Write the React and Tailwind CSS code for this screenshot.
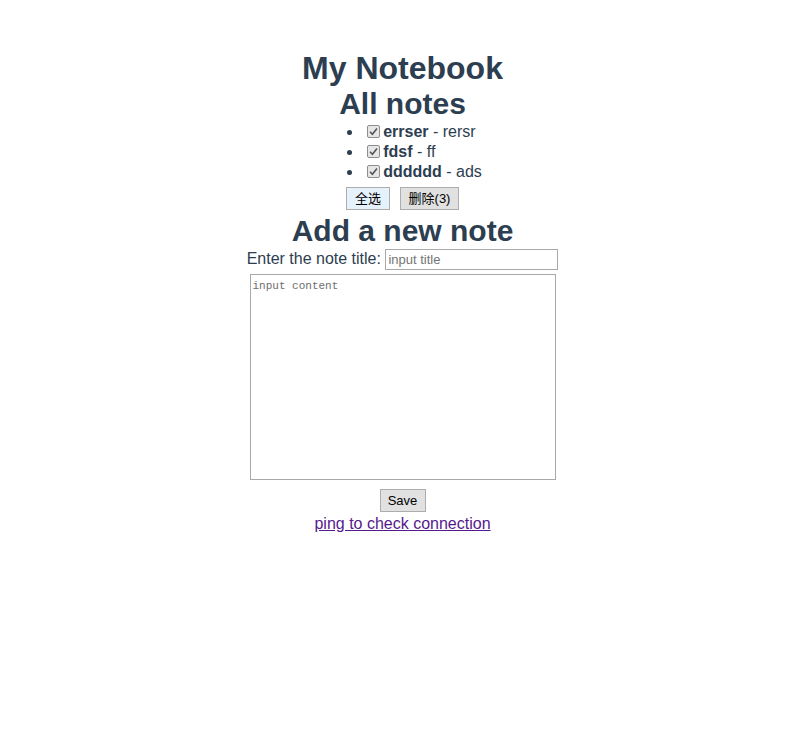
import { useState } from 'react';

const notes = [
  { id: 1, title: 'errser', content: 'rersr' },
  { id: 2, title: 'fdsf', content: 'ff' },
  { id: 3, title: 'dddddd', content: 'ads' },
];

const Check = () => (
  <span className="inline-flex items-center justify-center w-[13px] h-[13px] mr-[3px] ml-[4px] border border-[#8d8d8d] rounded-[2px] bg-[#e6e6e6] shrink-0">
    <svg width="9" height="9" viewBox="0 0 9 9">
      <path d="M1 4.8 L3.4 7.2 L8 1.6" fill="none" stroke="#555" strokeWidth="1.6" />
    </svg>
  </span>
);

const btn =
  "h-[23px] px-[6px] border border-[#adadad] bg-[#e1e1e1] text-[13px] text-black leading-none rounded-none";

const App = () => {
  const [title, setTitle] = useState('');
  const [content, setContent] = useState('');

  return (
    <div className="min-h-screen bg-white text-[#2c3e50] text-center pl-[2px]" style={{ fontFamily: '"Liberation Sans", Arial, "Noto Sans CJK SC", sans-serif' }}>
      <div className="pt-[50px] flex flex-col items-center">
        <h1 className="text-[32px] font-bold leading-[37px]">My Notebook</h1>
        <h2 className="text-[30px] font-bold leading-[34.5px]">All notes</h2>

        {/* Note list */}
        <ul className="list-disc list-outside pl-[40px] text-left text-[16px] marker:text-[#2c3e50]">
          {notes.map((note) => (
            <li key={note.id} className="h-[20px] leading-[20px]">
              <span className="inline-flex items-center align-top h-[20px]">
                <Check />
                <b>{note.title}</b>
                <span className="whitespace-pre"> - {note.content}</span>
              </span>
            </li>
          ))}
        </ul>

        <div className="flex justify-center gap-[10px] pt-[5px]">
          <button className={`${btn} border-[#7eb4ea] bg-[#e5f1fb] w-[44px]`}>全选</button>
          <button className={`${btn} w-[59px]`}>删除(3)</button>
        </div>

        <h2 className="text-[30px] font-bold leading-[34.5px] mt-[4px]">Add a new note</h2>

        <div className="flex items-center h-[22px] text-[16px]">
          <label className="whitespace-pre">Enter the note title: </label>
          <input
            value={title}
            onChange={(e) => setTitle(e.target.value)}
            placeholder="input title"
            className="w-[173px] h-[21px] border border-[#a9a9a9] px-[2px] text-[13px] placeholder:text-[#757575] outline-none"
          />
        </div>

        <textarea
          value={content}
          onChange={(e) => setContent(e.target.value)}
          placeholder="input content"
          className="mt-[4px] w-[306px] h-[206px] border border-[#a9a9a9] px-[2px] pt-[4px] pb-[2px] text-[11px] leading-[14px] resize-none outline-none placeholder:text-[#6d6d6d]"
          style={{ fontFamily: '"Liberation Mono", "Courier New", monospace' }}
        />

        <button className={`${btn} mt-[9px] h-[21px] w-[46px]`}>Save</button>

        <a href="#" className="mt-[3px] text-[16px] leading-[18px] text-[#551a8b] underline">
          ping to check connection
        </a>
      </div>
    </div>
  );
};

export default App;
